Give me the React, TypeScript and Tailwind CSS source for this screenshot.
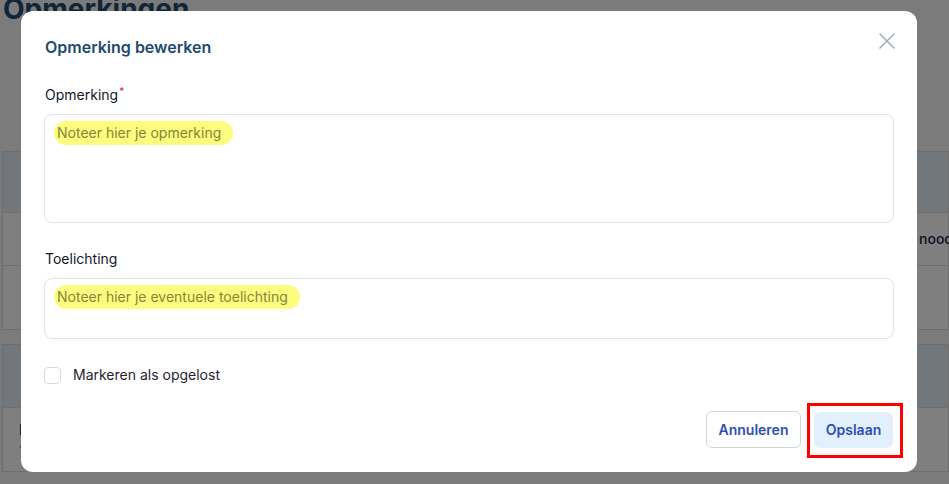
import React from 'react';

/**
 * "Opmerking bewerken" dialog shown over the Opmerkingen overview.
 * The page behind is dimmed by an overlay; the save button carries a red
 * annotation frame as in the screenshot.
 */

const highlight = 'inline-block rounded-[12px] bg-[#fcfc7e] pl-[3px] pr-[12px] -ml-[3px] py-[2px] text-[#86863a]';

function BackgroundPage() {
  return (
    <div className="pl-[2px]">
      <h1 className="-mt-[8px] ml-[1px] text-[28px] leading-[34px] font-bold text-[#1e4a70]">
        Opmerkingen
      </h1>

      <div className="mt-[125px] border border-[#dcdcdc] bg-white">
        <div className="h-[60px] bg-[#e4eef8]" />
        <div className="flex h-[53px] items-center border-t border-[#dedede]">
          <span className="ml-[916px] whitespace-nowrap text-sm font-medium text-[#0f2744]">
            noodzakelijk
          </span>
        </div>
        <div className="h-[64px] border-t border-[#dedede]" />
      </div>

      <div className="mt-[14px] border border-[#dcdcdc] bg-white">
        <div className="h-[62px] bg-[#e4eef8]" />
        <div className="h-[64px] border-t border-[#dedede] pl-[16px] pt-[12px]">
          <div className="text-sm font-medium text-[#0f2744]">Locatie</div>
          <div className="text-xs text-[#6b7280]">^ Gewijzigd</div>
        </div>
      </div>
    </div>
  );
}

function Field({ label, required, height, placeholder }: { label: string; required?: boolean; height: string; placeholder: string }) {
  return (
    <div>
      <div className="pl-[1px] text-sm leading-5 text-[#111827]">
        {label}
        {required && <sup className="ml-[1px] text-[10px] text-[#e11d48]">*</sup>}
      </div>
      <div className={`mt-[9px] rounded-lg border border-[#e3e4e8] bg-white pl-[12px] pt-[5px] ${height}`}>
        <span className={`${highlight} text-sm leading-5`}>{placeholder}</span>
      </div>
    </div>
  );
}

export default function App() {
  return (
    <div className="relative h-[484px] w-[949px] overflow-hidden bg-[#f6f6f6] font-['Inter',sans-serif]">
      <BackgroundPage />

      <div className="absolute inset-0 bg-black/50" />

      <div className="absolute left-[21px] top-[11px] w-[896px] rounded-xl bg-white px-[23px] pt-[26px] pb-[24px]">
        <div className="flex items-start justify-between">
          <h2 className="pl-[1px] text-base leading-5 font-semibold text-[#1e4a70]">Opmerking bewerken</h2>
          <svg className="-mt-[5px] -mr-[2px] h-[18px] w-[18px] text-[#9ca3af]" viewBox="0 0 18 18" fill="none" stroke="currentColor" strokeWidth="1.4" strokeLinecap="round">
            <path d="M2 2l14 14M16 2L2 16" />
          </svg>
        </div>

        <div className="mt-[28px]">
          <Field label="Opmerking" required height="h-[109px]" placeholder="Noteer hier je opmerking" />
        </div>
        <div className="mt-[26px]">
          <Field label="Toelichting" height="h-[61px]" placeholder="Noteer hier je eventuele toelichting" />
        </div>

        <label className="mt-[26px] flex items-center gap-[12px]">
          <span className="h-[17px] w-[17px] rounded-[4px] border border-[#d8dadf] bg-white" />
          <span className="text-sm leading-5 text-[#1f2430]">Markeren als opgelost</span>
        </label>

        <div className="mt-[26px] flex items-center justify-end gap-[13px] pr-[1px]">
          <button className="h-[37px] w-[95px] rounded-md border border-[#cfd3dc] bg-white text-sm font-semibold text-[#2d50b3]">
            Annuleren
          </button>
          <div className="relative">
            <button className="h-[36px] w-[79px] rounded-md bg-[#e2effd] text-sm font-semibold text-[#2d50b3]">
              Opslaan
            </button>
            <div className="absolute -left-[7px] -right-[10px] -top-[9px] -bottom-[10px] border-[3px] border-[#ff0000]" />
          </div>
        </div>
      </div>
    </div>
  );
}
